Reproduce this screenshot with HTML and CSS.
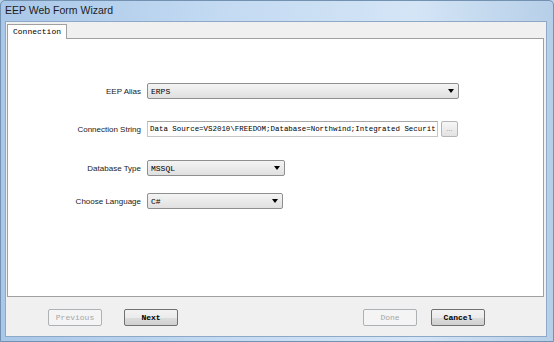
FILE: index.html
```html
<!DOCTYPE html>
<html>
<head>
<meta charset="utf-8">
<link rel="stylesheet" href="styles.css">
</head>
<body>
<div class="window">
  <div class="titlebar">EEP Web Form Wizard</div>
  <div class="client">
    <div class="tabstrip">
      <div class="tab">Connection</div>
    </div>
    <div class="panel">
      <div class="row r1">
        <div class="label">EEP Alias</div>
        <div class="combo w-alias"><span>ERPS</span><span class="arrow"></span></div>
      </div>
      <div class="row r2">
        <div class="label">Connection String</div>
        <div class="textbox">Data Source=VS2010\FREEDOM;Database=Northwind;Integrated Securit</div>
        <div class="dots">...</div>
      </div>
      <div class="row r3">
        <div class="label">Database Type</div>
        <div class="combo w-type"><span>MSSQL</span><span class="arrow"></span></div>
      </div>
      <div class="row r4">
        <div class="label">Choose Language</div>
        <div class="combo w-lang"><span>C#</span><span class="arrow"></span></div>
      </div>
    </div>
    <div class="buttons">
      <div class="btn disabled b-prev">Previous</div>
      <div class="btn b-next">Next</div>
      <div class="spacer"></div>
      <div class="btn disabled b-done">Done</div>
      <div class="btn b-cancel">Cancel</div>
    </div>
  </div>
</div>
</body>
</html>
```

FILE: styles.css
```css
html, body {
  margin: 0;
  padding: 0;
  width: 554px;
  height: 342px;
  overflow: hidden;
  background: #b9d1ea;
}
.window {
  width: 554px;
  height: 342px;
  box-sizing: border-box;
  display: flex;
  flex-direction: column;
  background: linear-gradient(90deg, #a9c7e8 0%, #c3daf2 40%, #d4e5f6 75%, #b6cfe8 100%);
  border: 1px solid #7391b0;
  border-radius: 5px 5px 0 0;
  padding: 0 6px 4px 4px;
}
.titlebar {
  height: 20px;
  line-height: 18px;
  font-family: "Liberation Sans", Arial, sans-serif;
  font-size: 10.5px;
  color: #1e1e1e;
  padding-left: 0;
}
.client {
  flex: 1;
  background: #f0f0f0;
  border: 1px solid #8da9c7;
  display: flex;
  flex-direction: column;
}
.tabstrip {
  height: 16px;
  display: flex;
  align-items: flex-end;
  padding-left: 1px;
}
.tab {
  height: 15px;
  box-sizing: border-box;
  padding: 0 5px;
  background: #ffffff;
  border: 1px solid #a0a0a0;
  border-bottom: none;
  font-family: "Liberation Mono", monospace;
  font-size: 8px;
  line-height: 14px;
  color: #000;
  position: relative;
  top: 1px;
}
.panel {
  height: 259px;
  box-sizing: border-box;
  margin: 0 2px 0 1px;
  background: #ffffff;
  border: 1px solid #a0a0a0;
  padding-top: 44px;
  display: flex;
  flex-direction: column;
}
.row {
  display: flex;
  align-items: center;
  height: 16px;
}
.r2 { margin-top: 22px; }
.r3 { margin-top: 23px; }
.r4 { margin-top: 17px; }
.label {
  width: 133px;
  text-align: right;
  padding-right: 6px;
  font-family: "Liberation Sans", Arial, sans-serif;
  font-size: 8px;
  color: #1a1a1a;
}
.combo {
  height: 16px;
  box-sizing: border-box;
  border: 1px solid #8e8f8f;
  border-radius: 2px;
  background: linear-gradient(#f4f4f4, #e0e0e0);
  display: flex;
  align-items: center;
  justify-content: space-between;
  padding: 0 4px 0 3px;
  font-family: "Liberation Mono", monospace;
  font-size: 8px;
  color: #000;
}
.w-alias { width: 312px; }
.w-type { width: 138px; }
.w-lang { width: 136px; }
.arrow {
  width: 0;
  height: 0;
  border-left: 3px solid transparent;
  border-right: 3px solid transparent;
  border-top: 4px solid #000;
}
.textbox {
  width: 291px;
  height: 16px;
  box-sizing: border-box;
  border: 1px solid #c6c6c6;
  border-top-color: #a8a8a8;
  background: #fff;
  padding-left: 2px;
  font-family: "Liberation Mono", monospace;
  font-size: 7.45px;
  line-height: 14px;
  white-space: nowrap;
  overflow: hidden;
  color: #000;
}
.dots {
  width: 17px;
  height: 16px;
  margin-left: 3px;
  box-sizing: border-box;
  border: 1px solid #b5b5b5;
  border-radius: 2px;
  background: linear-gradient(#f6f6f6, #e2e2e2);
  font-family: "Liberation Sans", Arial, sans-serif;
  font-size: 7px;
  color: #888;
  text-align: center;
  line-height: 14px;
}
.buttons {
  flex: 1;
  display: flex;
  align-items: flex-start;
  padding: 12px 0 0 42px;
}
.btn {
  width: 54px;
  height: 17px;
  box-sizing: border-box;
  border: 1px solid #707070;
  border-radius: 2px;
  background: linear-gradient(#f3f3f3 0%, #ebebeb 50%, #dddddd 51%, #cfcfcf 100%);
  font-family: "Liberation Mono", monospace;
  font-weight: bold;
  font-size: 8px;
  line-height: 15px;
  text-align: center;
  color: #000;
}
.btn.disabled {
  border-color: #adb2b5;
  background: #f4f4f4;
  color: #a6a6a6;
  font-weight: normal;
}
.b-next { margin-left: 22px; }
.spacer { width: 185px; }
.b-cancel { margin-left: 14px; }
```
